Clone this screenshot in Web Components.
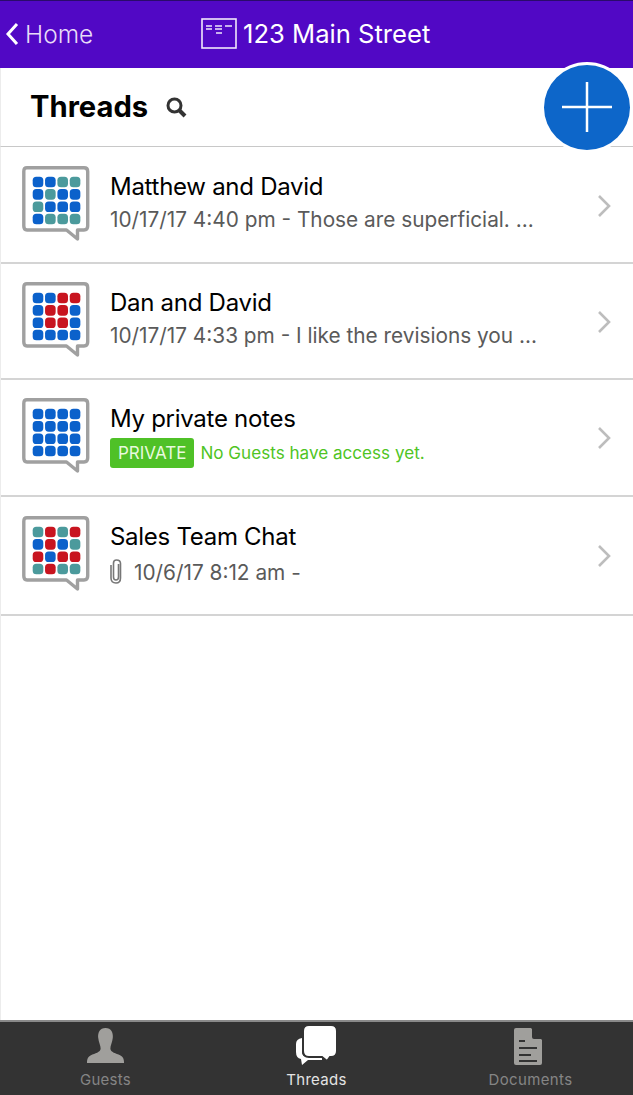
<!DOCTYPE html>
<html>
<head>
<meta charset="utf-8">
<title>Threads</title>
<style>
    html, body { margin: 0; padding: 0; height: 100%; }
    body { font-family: Inter, "Liberation Sans", sans-serif; background: #fff; overflow: hidden; }
    #app { display: flex; flex-direction: column; height: 1095px; position: relative; }
    thread-list { flex: 1; }
</style>
</head>
<body>
<div id="app">
    <app-bar title="123 Main Street" back="Home"></app-bar>
    <threads-header></threads-header>
    <thread-list>
        <thread-row name="Matthew and David" dots="BBTTBTBBTBBBBTTT" height="117" pad="19">10/17/17 4:40 pm - Those are superficial. ...</thread-row>
        <thread-row name="Dan and David" dots="BBRRBRRBBRRBBBBB" height="116" pad="18">10/17/17 4:33 pm - I like the revisions you ...</thread-row>
        <thread-row name="My private notes" dots="BBBBBBBBBBBBBBBB" height="117" pad="18" private>No Guests have access yet.</thread-row>
        <thread-row name="Sales Team Chat" dots="TRTRBRBTRBRRTRTT" height="119" pad="19" attach>10/6/17 8:12 am -</thread-row>
    </thread-list>
    <tab-bar></tab-bar>
    <add-button></add-button>
</div>
<script>
class AppBar extends HTMLElement {
    constructor() {
        super();
        this.attachShadow({ mode: 'open' });
    }
    connectedCallback() {
        this.shadowRoot.innerHTML = `
            <style>
                :host {
                    display: flex;
                    align-items: center;
                    height: 65px;
                    padding-bottom: 2px;
                    border-top: 1px solid #2a0b6b;
                    background: #5108c5;
                    color: #fff;
                    font-size: 25.6px;
                }
                .back { display: flex; align-items: center; gap: 6px; width: 201px; padding-left: 5px; box-sizing: border-box; font-weight: 300; font-size: 24.5px; color: #e8dcf8; }
                .title { display: flex; align-items: center; gap: 6px; }
                svg { display: block; }
            </style>
            <div class="back">
                <svg width="14" height="24" viewBox="0 0 14 24"><path d="M12 2 L3 12 L12 22" fill="none" stroke="#fff" stroke-width="3"/></svg>
                <span>${this.getAttribute('back')}</span>
            </div>
            <div class="title">
                <svg width="36" height="32" viewBox="0 0 36 32" fill="none" stroke="#f0e8fb">
                    <rect x="1" y="1" width="34" height="29" stroke-width="1.6"/>
                    <path d="M5 8h6M5 11h6M14 8h7M14 11h7M15 15h6M24 8h7" stroke-width="1.6"/>
                </svg>
                <span>${this.getAttribute('title')}</span>
            </div>
        `;
    }
}
customElements.define('app-bar', AppBar);

class ThreadsHeader extends HTMLElement {
    constructor() {
        super();
        this.attachShadow({ mode: 'open' });
    }
    connectedCallback() {
        this.shadowRoot.innerHTML = `
            <style>
                :host {
                    display: flex;
                    align-items: center;
                    gap: 17px;
                    height: 78px;
                    padding-left: 29px;
                    box-sizing: border-box;
                    border-left: 1px solid #ececec;
                }
                h1 { margin: 0; font-size: 29.2px; font-weight: 700; color: #000; margin-top: -1px; }
                svg { display: block; }
            </style>
            <h1>Threads</h1>
            <svg width="22" height="22" viewBox="0 0 22 22" fill="none" stroke="#333">
                <circle cx="9.5" cy="9.5" r="6.5" stroke-width="3"/>
                <path d="M14 14 L20 20" stroke-width="4"/>
            </svg>
        `;
    }
}
customElements.define('threads-header', ThreadsHeader);

class ThreadList extends HTMLElement {
    constructor() {
        super();
        this.attachShadow({ mode: 'open' });
        this.shadowRoot.innerHTML = `
            <style>
                :host { display: block; border-top: 1px solid #c8c8c8; border-left: 1px solid #ececec; }
            </style>
            <slot></slot>
        `;
    }
}
customElements.define('thread-list', ThreadList);

class ThreadRow extends HTMLElement {
    constructor() {
        super();
        this.attachShadow({ mode: 'open' });
    }
    avatar(code) {
        const colors = { B: '#0b61cb', T: '#4b9a9c', R: '#c8141f' };
        let dots = '';
        [...code].forEach((c, i) => {
            const x = 10.7 + (i % 4) * 12.35;
            const y = 10.7 + Math.floor(i / 4) * 12.35;
            dots += `<rect x="${x}" y="${y}" width="10.6" height="10.6" rx="3.6" fill="${colors[c]}"/>`;
        });
        return `<svg class="avatar" width="68" height="76" viewBox="0 0 68 76">
            <path d="M5 1.8 H62 Q65.7 1.8 65.7 5.5 V60 Q65.7 64 62 64 H55.5 V73 L44.5 64 H5 Q1.8 64 1.8 60 V5.5 Q1.8 1.8 5 1.8 Z" fill="#fff" stroke="#a0a0a0" stroke-width="3.4" stroke-linejoin="round"/>
            ${dots}
        </svg>`;
    }
    connectedCallback() {
        const isPrivate = this.hasAttribute('private');
        const attach = this.hasAttribute('attach');
        this.shadowRoot.innerHTML = `
            <style>
                :host {
                    display: flex;
                    align-items: flex-start;
                    height: ${this.getAttribute('height')}px;
                    box-sizing: border-box;
                    padding: ${this.getAttribute('pad')}px 22px 0 21px;
                    border-bottom: 2px solid #d4d4d4;
                }
                .avatar { flex: none; display: block; }
                .body { flex: 1; min-width: 0; margin-left: 20px; }
                .name { font-size: 24px; line-height: 30px; color: #000; margin-top: 6px; white-space: nowrap; letter-spacing: -0.28px; }
                .sub { display: flex; align-items: center; font-size: 20.8px; line-height: 30px; color: #5a5a5a; margin-top: 3px; white-space: nowrap; }
                .sub.green { color: #4fc424; font-size: 17.1px; margin-top: 4px; }
                .sub.clip-row { margin-top: 6px; }
                .tag { background: #4fc127; color: #e8f9de; font-size: 17px; line-height: 30px; padding: 0 8px; border-radius: 3px; margin-right: 6px; }
                .clip { margin-right: 12px; display: block; flex: none; margin-top: -4px; }
                .chevron { flex: none; display: block; margin-top: 28px; }
            </style>
            ${this.avatar(this.getAttribute('dots'))}
            <div class="body">
                <div class="name">${this.getAttribute('name')}</div>
                <div class="sub ${isPrivate ? 'green' : ''} ${attach ? 'clip-row' : ''}">
                    ${isPrivate ? '<span class="tag">PRIVATE</span>' : ''}
                    ${attach ? `<svg class="clip" width="12" height="26" viewBox="0 0 12 26" fill="none" stroke="#777" stroke-width="1.6"><path d="M8.5 6 V19 Q8.5 22 6 22 Q3.5 22 3.5 19 V5 Q3.5 2 6.5 2 Q10.5 2 10.5 5.5 V20 Q10.5 25 6 25 Q1 25 1 20 V7"/></svg>` : ''}
                    <span><slot></slot></span>
                </div>
            </div>
            <svg class="chevron" width="14" height="24" viewBox="0 0 14 24"><path d="M2 2 L12 12 L2 22" fill="none" stroke="#bdbdbd" stroke-width="2.6"/></svg>
        `;
    }
}
customElements.define('thread-row', ThreadRow);

class TabBar extends HTMLElement {
    constructor() {
        super();
        this.attachShadow({ mode: 'open' });
        this.shadowRoot.innerHTML = `
            <style>
                :host {
                    display: grid;
                    grid-template-columns: 211px 211px 211px;
                    height: 73px;
                    background: #333;
                    border-top: 2px solid #8a8a8a;
                }
                .tab { display: flex; flex-direction: column; align-items: center; color: #858585; font-size: 15px; letter-spacing: 0.3px; }
                .tab.on { color: #e4e4e4; }
                .icon { height: 47px; display: flex; align-items: flex-start; padding-top: 5px; box-sizing: border-box; }
                .tab.on .icon { padding-top: 2px; }
                .tab.docs .icon { padding-top: 6px; }
                .tab.docs span { margin-left: 6px; letter-spacing: 0.35px; }
                .tab span { line-height: 20px; margin-top: 1px; }
                svg { display: block; overflow: visible; }
            </style>
            <div class="tab">
                <div class="icon">
                    <svg width="37" height="37" viewBox="0 0 38 38" fill="#a09f9c">
                        <path d="M19 1 C25 1 27 6 26.5 11 C26 16 24 19 24 22 C24 26 30 27 34 29 C37 30.5 38 33 38 36 V37 H0 V36 C0 33 1 30.5 4 29 C8 27 14 26 14 22 C14 19 12 16 11.5 11 C11 6 13 1 19 1 Z"/>
                    </svg>
                </div>
                <span>Guests</span>
            </div>
            <div class="tab on">
                <div class="icon">
                    <svg width="42" height="42" viewBox="0 0 42 42" fill="#fff">
                        <path d="M6 14 V28 Q6 33 12 33 H26 V36 H12 L6 41 L5 35 Q0 34 0 28 V20 Q0 15 6 14 Z"/>
                        <path d="M13 1 H35 Q41 1 41 7 V27 Q41 33 35 33 H34 L31 37 L26 33 H13 Q7 33 7 27 V7 Q7 1 13 1 Z" stroke="#333" stroke-width="2"/>
                    </svg>
                </div>
                <span>Threads</span>
            </div>
            <div class="tab docs">
                <div class="icon">
                    <svg width="28" height="37" viewBox="0 0 28 37">
                        <path d="M2 0 H17 L28 12 V35 Q28 37 26 37 H2 Q0 37 0 35 V2 Q0 0 2 0 Z" fill="#a09f9c"/>
                        <path d="M18 0 L28 11 H20 Q18 11 18 9 Z" fill="#333"/>
                        <path d="M5 13 H11 M5 20 H23 M5 27 H17 M5 33 H23" stroke="#333" stroke-width="2"/>
                    </svg>
                </div>
                <span>Documents</span>
            </div>
        `;
    }
}
customElements.define('tab-bar', TabBar);

class AddButton extends HTMLElement {
    constructor() {
        super();
        this.attachShadow({ mode: 'open' });
        this.shadowRoot.innerHTML = `
            <style>
                :host {
                    position: absolute;
                    left: 541px;
                    top: 62px;
                    width: 92px;
                    height: 91px;
                    box-sizing: border-box;
                    border: 3px solid #fff;
                    border-radius: 50%;
                    background: #0d66c9;
                    display: flex;
                    align-items: center;
                    justify-content: center;
                }
                svg { display: block; margin-top: -2px; }
            </style>
            <svg width="50" height="50" viewBox="0 0 50 50"><path d="M25 0 V50 M0 25 H50" stroke="#fff" stroke-width="2.5"/></svg>
        `;
    }
}
customElements.define('add-button', AddButton);
</script>
</body>
</html>
